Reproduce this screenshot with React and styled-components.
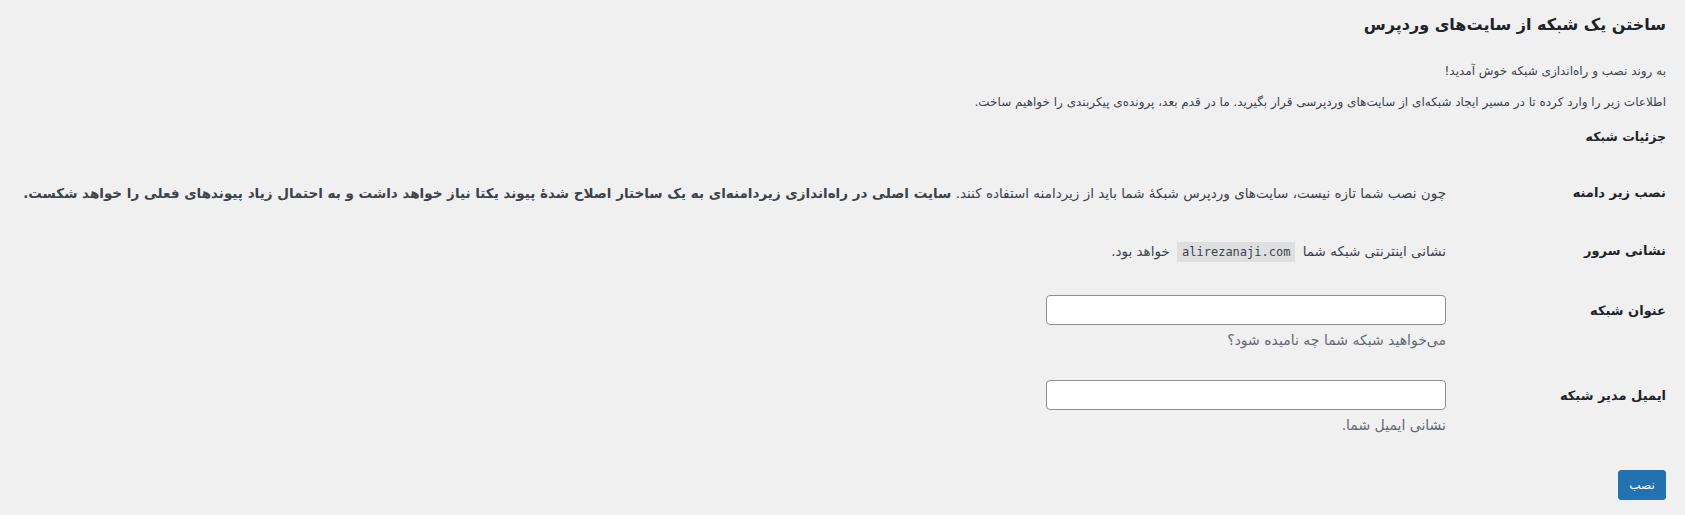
import React from "react";
import styled, { createGlobalStyle } from "styled-components";

const GlobalStyle = createGlobalStyle`
  html, body {
    margin: 0;
    padding: 0;
    background: #f0f0f1;
  }
  body {
    font-family: "DejaVu Sans", "Noto Sans", sans-serif;
    color: #3c434a;
    font-size: 13px;
  }
`;

const Wrap = styled.div`
  direction: rtl;
  padding: 0 19px 0 10px;
`;

const Title = styled.h1`
  margin: 10px 0 0;
  font-size: 16px;
  line-height: 30px;
  font-weight: 700;
  color: #1d2327;
`;

const Para = styled.p`
  margin: ${(p) => p.$top}px 0 0;
  font-size: 12px;
  line-height: 20px;
  color: #3c434a;
`;

const SectionTitle = styled.h2`
  margin: 15px 0 0;
  font-size: 12.5px;
  line-height: 20px;
  font-weight: 700;
  color: #1d2327;
`;

const FormTable = styled.div`
  margin-top: 17px;
  display: flex;
  flex-direction: column;
`;

const Row = styled.div`
  display: grid;
  grid-template-columns: 210px 1fr;
`;

const Label = styled.div`
  padding: ${(p) => (p.$field ? "21px 0 20px 10px" : "20px 0 20px 10px")};
  font-size: 13px;
  line-height: 18px;
  font-weight: 700;
  color: #1d2327;
`;

const Cell = styled.div`
  padding: ${(p) => (p.$field ? "14px 10px 16px" : "20px 10px")};
  font-size: 13.5px;
  line-height: 18px;
  color: #3c434a;
`;

const Code = styled.code`
  font-family: "DejaVu Sans Mono", "Liberation Mono", monospace;
  font-size: 12px;
  background: rgba(0, 0, 0, 0.07);
  padding: 3px 5px 3px;
  margin: 0 3px;
  direction: ltr;
  unicode-bidi: embed;
`;

const TextInput = styled.input`
  display: block;
  box-sizing: border-box;
  width: 400px;
  height: 30px;
  border: 1px solid #8c8f94;
  border-radius: 4px;
  background: #fff;
  margin: 0;
  padding: 0 8px;
`;

const Description = styled.p`
  margin: 5px 0 0;
  font-size: 14px;
  line-height: 20px;
  color: #646970;
`;

const Submit = styled.div`
  padding-top: 19px;
`;

const Button = styled.button`
  box-sizing: border-box;
  height: 30px;
  min-width: 48px;
  padding: 0 10px;
  border: 1px solid #2271b1;
  border-radius: 3px;
  background: #2271b1;
  color: #fff;
  font-family: "DejaVu Sans", sans-serif;
  font-size: 12px;
  cursor: pointer;
`;

export default function App() {
  return (
    <>
      <GlobalStyle />
      <Wrap>
        <Title>ساختن یک شبکه از سایت‌های وردپرس</Title>
        <Para $top={21}>به روند نصب و راه‌اندازی شبکه خوش آمدید!</Para>
        <Para $top={11}>
          اطلاعات زیر را وارد کرده تا در مسیر ایجاد شبکه‌ای از سایت‌های
          وردپرسی قرار بگیرید. ما در قدم بعد، پرونده‌ی پیکربندی را خواهیم ساخت.
        </Para>
        <SectionTitle>جزئیات شبکه</SectionTitle>
        <FormTable>
          <Row>
            <Label>نصب زیر دامنه</Label>
            <Cell>
              چون نصب شما تازه نیست، سایت‌های وردپرس شبکهٔ شما باید از زیردامنه
              استفاده کنند.{" "}
              <strong>
                سایت اصلی در راه‌اندازی زیردامنه‌ای به یک ساختار اصلاح شدهٔ پیوند
                یکتا نیاز خواهد داشت و به احتمال زیاد پیوندهای فعلی را خواهد
                شکست.
              </strong>
            </Cell>
          </Row>
          <Row>
            <Label>نشانی سرور</Label>
            <Cell>
              نشانی اینترنتی شبکه شما <Code>alirezanaji.com</Code> خواهد بود.
            </Cell>
          </Row>
          <Row>
            <Label $field>عنوان شبکه</Label>
            <Cell $field>
              <TextInput type="text" />
              <Description>می‌خواهید شبکه شما چه نامیده شود؟</Description>
            </Cell>
          </Row>
          <Row>
            <Label $field>ایمیل مدیر شبکه</Label>
            <Cell $field>
              <TextInput type="text" />
              <Description>نشانی ایمیل شما.</Description>
            </Cell>
          </Row>
        </FormTable>
        <Submit>
          <Button>نصب</Button>
        </Submit>
      </Wrap>
    </>
  );
}
